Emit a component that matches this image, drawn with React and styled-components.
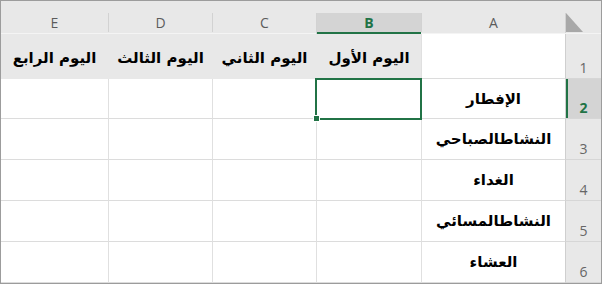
import React from 'react'
import styled, { createGlobalStyle, css } from 'styled-components'

const GREEN = '#217346'
const COLS = '36px 144px 105px 104px 104px 107px'

const GlobalStyle = createGlobalStyle`
    body {
        margin: 0;
        background: #ffffff;
    }
`

const Sheet = styled.div`
    width: 602px;
    height: 284px;
    box-sizing: border-box;
    border: 1px solid #9c9c9c;
    background: #ffffff;
    direction: rtl;
    overflow: hidden;
`

const HeaderRow = styled.div`
    display: grid;
    grid-template-columns: ${COLS};
    height: 33px;
    box-sizing: border-box;
    padding-top: 12px;
    background: #e8e8e8;
    border-bottom: 1px solid #f4f4f4;
`

const Corner = styled.div`
    display: flex;
    align-items: flex-end;
    justify-content: flex-end;
    padding: 0 2px 1px 0;
    border-left: 1px solid #d2d2d2;
    height: 19px;
`

const ColHead = styled.div`
    display: flex;
    align-items: center;
    justify-content: center;
    height: 19px;
    font-family: "Open Sans", "DejaVu Sans", sans-serif;
    font-size: 14px;
    color: #5c5c5c;
    border-left: ${p => (p.$last ? 'none' : '1px solid #d2d2d2')};
    ${p => p.$active && css`
        background: #d4d4d4;
        color: ${GREEN};
        font-weight: 700;
        box-shadow: inset 0 -2px 0 ${GREEN};
        height: 21px;
        padding-bottom: 2px;
        box-sizing: border-box;
    `}
`

const Row = styled.div`
    display: grid;
    grid-template-columns: ${COLS};
    height: ${p => p.$h}px;
`

const RowHead = styled.div`
    display: flex;
    align-items: flex-end;
    justify-content: center;
    padding-bottom: 1px;
    box-sizing: border-box;
    background: #e8e8e8;
    border-left: 1px solid #cfcfcf;
    border-bottom: 1px solid #d6d6d6;
    font-family: "Open Sans", "DejaVu Sans", sans-serif;
    font-size: 14px;
    color: #666666;
    ${p => p.$active && css`
        background: #d4d4d4;
        color: ${GREEN};
        font-weight: 700;
        box-shadow: inset 2px 0 0 ${GREEN};
    `}
`

const Cell = styled.div`
    position: relative;
    display: flex;
    align-items: center;
    justify-content: center;
    box-sizing: border-box;
    padding-top: ${p => (p.$fill ? 3 : 0)}px;
    background: ${p => (p.$fill ? '#e8e8e8' : '#ffffff')};
    border-left: 1px solid ${p => (p.$fill ? '#e8e8e8' : '#e0e0e0')};
    border-bottom: 1px solid ${p => (p.$fill ? '#e8e8e8' : '#dcdcdc')};
    font-family: "DejaVu Sans", "Noto Sans", sans-serif;
    font-weight: 700;
    font-size: 15px;
    color: #000000;
    white-space: nowrap;
    ${p => p.$last && css`border-left: none;`}
    ${p => p.$selected && css`
        outline: 2px solid ${GREEN};
        outline-offset: -1px;
        z-index: 1;
    `}
`

const FillHandle = styled.span`
    position: absolute;
    left: -4px;
    bottom: -4px;
    width: 5px;
    height: 5px;
    background: ${GREEN};
    border: 1px solid #ffffff;
`

const SelectAll = () => (
    <svg width="17" height="19" viewBox="0 0 17 19">
        <polygon points="0,0 0,19 17,19" fill="#a8a8a8" />
    </svg>
)

const letters = ['A', 'B', 'C', 'D', 'E']
const days = ['اليوم الأول', 'اليوم الثاني', 'اليوم الثالث', 'اليوم الرابع']
const meals = ['الإفطار', 'النشاطالصباحي', 'الغداء', 'النشاطالمسائي', 'العشاء']
const heights = [45, 40, 41, 41, 41, 41]

const App = () => {
    return (
        <>
            <GlobalStyle />
            <Sheet>
                <HeaderRow>
                    <Corner><SelectAll /></Corner>
                    {letters.map((l, i) => (
                        <ColHead key={l} $active={l === 'B'} $last={i === letters.length - 1}>{l}</ColHead>
                    ))}
                </HeaderRow>
                <Row $h={heights[0]}>
                    <RowHead>1</RowHead>
                    <Cell />
                    {days.map((d, i) => (
                        <Cell key={d} $fill $last={i === days.length - 1}>{d}</Cell>
                    ))}
                </Row>
                {meals.map((m, r) => (
                    <Row key={m} $h={heights[r + 1]}>
                        <RowHead $active={r === 0}>{r + 2}</RowHead>
                        <Cell>{m}</Cell>
                        {days.map((d, i) => (
                            <Cell key={d} $selected={r === 0 && i === 0} $last={i === days.length - 1}>
                                {r === 0 && i === 0 && <FillHandle />}
                            </Cell>
                        ))}
                    </Row>
                ))}
            </Sheet>
        </>
    )
}

export default App
